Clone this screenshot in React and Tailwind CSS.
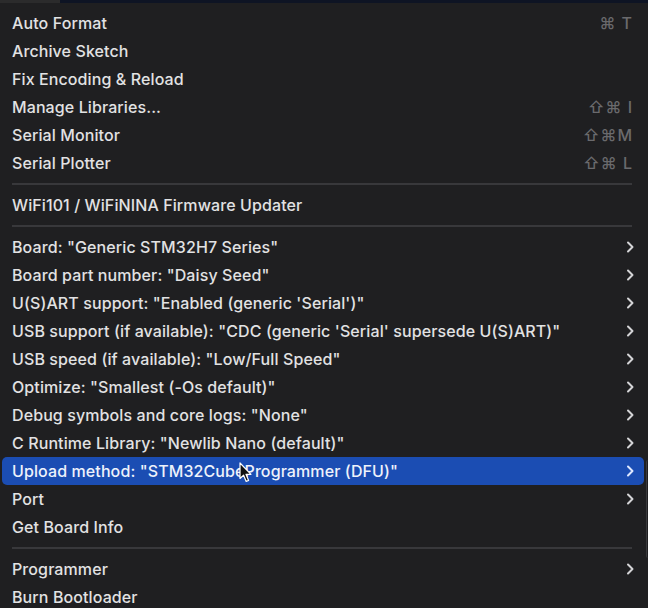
import React from "react";

const GROUPS = [
  [
    { label: "Auto Format", keys: "⌘ T" },
    { label: "Archive Sketch" },
    { label: "Fix Encoding & Reload" },
    { label: "Manage Libraries...", keys: "⇧⌘ I" },
    { label: "Serial Monitor", keys: "⇧⌘M" },
    { label: "Serial Plotter", keys: "⇧⌘ L" },
  ],
  [{ label: "WiFi101 / WiFiNINA Firmware Updater" }],
  [
    { label: 'Board: "Generic STM32H7 Series"', sub: true },
    { label: 'Board part number: "Daisy Seed"', sub: true },
    { label: 'U(S)ART support: "Enabled (generic \'Serial\')"', sub: true },
    { label: 'USB support (if available): "CDC (generic \'Serial\' supersede U(S)ART)"', sub: true },
    { label: 'USB speed (if available): "Low/Full Speed"', sub: true },
    { label: 'Optimize: "Smallest (-Os default)"', sub: true },
    { label: 'Debug symbols and core logs: "None"', sub: true },
    { label: 'C Runtime Library: "Newlib Nano (default)"', sub: true },
    { label: 'Upload method: "STM32CubeProgrammer (DFU)"', sub: true, active: true },
    { label: "Port", sub: true },
    { label: "Get Board Info" },
  ],
  [
    { label: "Programmer", sub: true },
    { label: "Burn Bootloader" },
  ],
];

function Chevron({ active }) {
  return (
    <svg width="8" height="12" viewBox="0 0 8 12">
      <path d="M2 1.5 L6.5 6 L2 10.5" fill="none" stroke={active ? "#dfe8ff" : "#d4d4d6"} strokeWidth="2" strokeLinecap="round" strokeLinejoin="round" />
    </svg>
  );
}

function Cursor() {
  return (
    <svg width="14" height="22" viewBox="0 0 14 22" className="absolute left-[237px] top-[5px]">
      <path d="M1 1 L1 16.5 L4.6 13.2 L7.2 19.4 L9.6 18.4 L7 12.3 L12 12.3 Z" fill="#111" stroke="#fff" strokeWidth="1.2" strokeLinejoin="round" />
    </svg>
  );
}

function Row({ item }) {
  return (
    <div className={`relative flex h-[28px] items-center justify-between rounded-[5px] pl-[10px] pr-[10px] ${item.active ? "bg-[#1b4db3]" : ""}`}>
      <span className={`text-[16px] font-medium tracking-[0.1px] ${item.active ? "text-[#eef2fb]" : "text-[#e2e2e3]"}`}>{item.label}</span>
      {item.keys && <span className="pr-[1px] text-[16px] font-medium tracking-[1px] text-[#6a6a6d]">{item.keys}</span>}
      {item.sub && <Chevron active={item.active} />}
      {item.active && <Cursor />}
    </div>
  );
}

export default function App() {
  return (
    <div className="h-[608px] w-[648px] overflow-hidden bg-[#1f1f21] font-['Inter','Liberation_Sans',sans-serif]">
      <div className="flex h-[3px]">
        <div className="w-[60px] bg-[#2b2b2c]" />
        <div className="flex-1 bg-[#0e1424]" />
      </div>
      <div className="relative pl-[2px] pr-[4px] pt-[6px]">
        <div className="absolute right-0 top-[457px] h-[98px] w-[2px] rounded-l-sm border-l border-[#3a3a3d]" />
        {GROUPS.map((group, gi) => (
          <div key={gi}>
            {gi > 0 && (
              <div className="flex h-[14px] items-center pl-[10px] pr-[12px]">
                <div className="h-[2px] w-full bg-[#38383b]" />
              </div>
            )}
            {group.map((item) => (
              <Row key={item.label} item={item} />
            ))}
          </div>
        ))}
      </div>
    </div>
  );
}
